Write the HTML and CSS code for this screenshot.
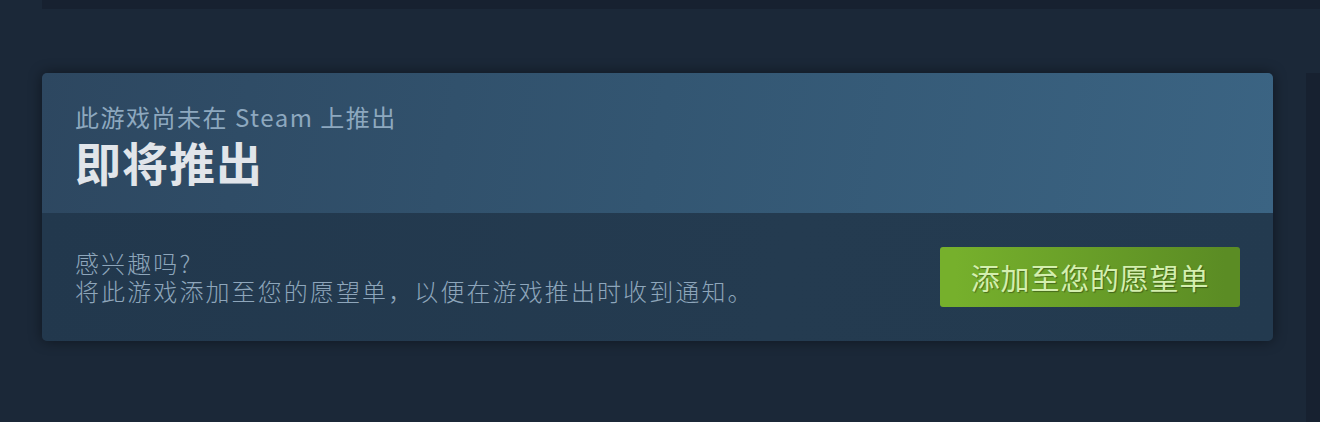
FILE: index.html
```html
<!DOCTYPE html>
<html lang="zh-CN">
<head>
    <meta charset="UTF-8">
    <meta name="viewport" content="width=device-width, initial-scale=1.0">
    <title>即将推出</title>
    <link rel="stylesheet" href="styles.css">
</head>
<body>
    <div class="topbar"></div>

    <div class="main">
        <div class="comingsoon">
            <div class="comingsoon-head">
                <div class="subtitle">此游戏尚未在 Steam 上推出</div>
                <h1>即将推出</h1>
            </div>
            <div class="comingsoon-body">
                <div class="pitch">
                    <p>感兴趣吗?</p>
                    <p>将此游戏添加至您的愿望单，以便在游戏推出时收到通知。</p>
                </div>
                <a class="btn-wishlist" href="#">添加至您的愿望单</a>
            </div>
        </div>
        <div class="sidebar"></div>
    </div>
</body>
</html>
```

FILE: styles.css
```css
body {
    margin: 0;
    background: #1b2838;
    font-family: 'Noto Sans CJK SC', 'Noto Sans', sans-serif;
    height: 422px;
    overflow: hidden;
}
.topbar {
    margin-left: 42px;
    height: 9px;
    background: #172130;
}
.main {
    display: flex;
    gap: 33px;
    padding: 64px 0 0 42px;
    height: 349px;
}
.comingsoon {
    flex: 0 0 1231px;
    align-self: flex-start;
    border-radius: 5px;
    overflow: hidden;
    box-shadow: 0 0 14px rgba(0, 0, 0, 0.45);
}
.comingsoon-head {
    height: 84px;
    padding: 29px 33px 27px;
    background: linear-gradient(100deg, #2d4760 0%, #335672 50%, #3b6483 100%);
}
.subtitle {
    font-size: 24px;
    line-height: 29px;
    letter-spacing: 1.5px;
    color: #8da8bf;
    margin-bottom: 5px;
}
h1 {
    margin: 0;
    font-size: 46px;
    line-height: 50px;
    font-weight: 700;
    letter-spacing: 1px;
    color: #e1e5ea;
}
.comingsoon-body {
    display: flex;
    align-items: center;
    justify-content: space-between;
    height: 128px;
    box-sizing: border-box;
    padding: 0 33px;
    background: linear-gradient(100deg, #22384d 0%, #243b50 60%, #233a4f 100%);
}
.pitch p {
    margin: 0;
    font-size: 24px;
    line-height: 28px;
    letter-spacing: 2.1px;
    color: #8ea6bb;
    font-weight: 300;
}
.btn-wishlist {
    display: block;
    width: 300px;
    height: 60px;
    line-height: 60px;
    text-align: center;
    border-radius: 3px;
    background: linear-gradient(to right, #76b02c 5%, #5b8c24 95%);
    color: #d4efae;
    font-size: 29px;
    letter-spacing: 0.8px;
    text-decoration: none;
    text-shadow: 1px 1px 1px rgba(0, 0, 0, 0.35);
}
.sidebar {
    flex: 1;
    background: #172130;
}
```
